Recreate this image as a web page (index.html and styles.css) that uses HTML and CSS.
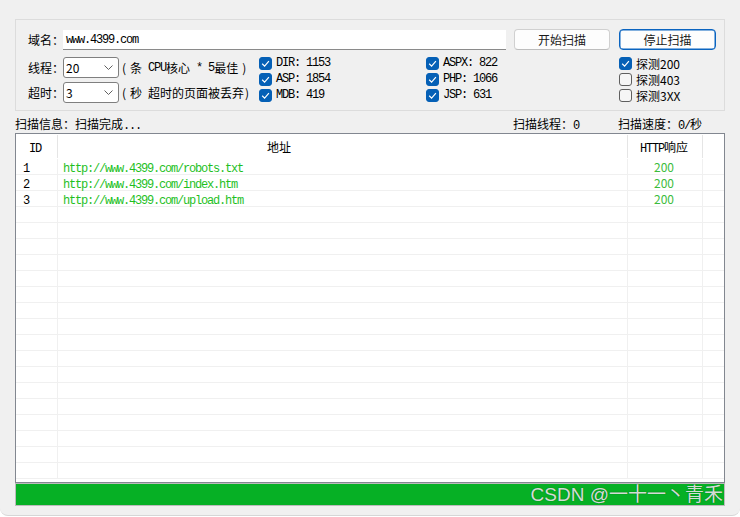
FILE: index.html
```html
<!DOCTYPE html>
<html lang="zh-CN">
<head>
<meta charset="utf-8">
<title>扫描</title>
<link rel="stylesheet" href="styles.css">
</head>
<body>
<div class="window">
  <div class="group">
    <div class="row-top">
      <span class="lbl">域名：</span>
      <div class="input"><span class="m">www.4399.com</span></div>
      <button class="btn btn-start">开始扫描</button>
      <button class="btn btn-stop">停止扫描</button>
    </div>
    <div class="row-bottom">
      <div class="col-left">
        <div class="field">
          <span class="lbl">线程：</span>
          <div class="combo"><span>20</span><svg width="9" height="5" viewBox="0 0 9 5"><polyline points="0.5,0.5 4.5,4.5 8.5,0.5" fill="none" stroke="#606060" stroke-width="1"/></svg></div>
          <span class="hint"><span class="po">(</span>条<span class="m"> CPU</span>核心<span class="m"> * 5</span>最佳<span class="pc">)</span></span>
        </div>
        <div class="field">
          <span class="lbl">超时：</span>
          <div class="combo"><span>3</span><svg width="9" height="5" viewBox="0 0 9 5"><polyline points="0.5,0.5 4.5,4.5 8.5,0.5" fill="none" stroke="#606060" stroke-width="1"/></svg></div>
          <span class="hint"><span class="po">(</span>秒<span class="m"> </span>超时的页面被丢弃<span class="pc2">)</span></span>
        </div>
      </div>
      <div class="checks">
        <label class="chk"><span class="box on"><svg width="13" height="13" viewBox="0 0 13 13"><polyline points="3.2,6.8 5.6,9.1 9.9,4.2" fill="none" stroke="#fff" stroke-width="1.2"/></svg></span><span class="m">DIR: 1153</span></label>
        <label class="chk"><span class="box on"><svg width="13" height="13" viewBox="0 0 13 13"><polyline points="3.2,6.8 5.6,9.1 9.9,4.2" fill="none" stroke="#fff" stroke-width="1.2"/></svg></span><span class="m">ASP: 1854</span></label>
        <label class="chk"><span class="box on"><svg width="13" height="13" viewBox="0 0 13 13"><polyline points="3.2,6.8 5.6,9.1 9.9,4.2" fill="none" stroke="#fff" stroke-width="1.2"/></svg></span><span class="m">MDB: 419</span></label>
      </div>
      <div class="checks">
        <label class="chk"><span class="box on"><svg width="13" height="13" viewBox="0 0 13 13"><polyline points="3.2,6.8 5.6,9.1 9.9,4.2" fill="none" stroke="#fff" stroke-width="1.2"/></svg></span><span class="m">ASPX: 822</span></label>
        <label class="chk"><span class="box on"><svg width="13" height="13" viewBox="0 0 13 13"><polyline points="3.2,6.8 5.6,9.1 9.9,4.2" fill="none" stroke="#fff" stroke-width="1.2"/></svg></span><span class="m">PHP: 1066</span></label>
        <label class="chk"><span class="box on"><svg width="13" height="13" viewBox="0 0 13 13"><polyline points="3.2,6.8 5.6,9.1 9.9,4.2" fill="none" stroke="#fff" stroke-width="1.2"/></svg></span><span class="m">JSP: 631</span></label>
      </div>
      <div class="checks">
        <label class="chk"><span class="box on"><svg width="13" height="13" viewBox="0 0 13 13"><polyline points="3.2,6.8 5.6,9.1 9.9,4.2" fill="none" stroke="#fff" stroke-width="1.2"/></svg></span><span>探测200</span></label>
        <label class="chk"><span class="box"></span><span>探测403</span></label>
        <label class="chk"><span class="box"></span><span>探测3XX</span></label>
      </div>
    </div>
  </div>

  <div class="status">
    <span class="st-info">扫描信息：扫描完成<span class="m">...</span></span>
    <span class="st-threads">扫描线程：<span class="m">0</span></span>
    <span class="st-speed">扫描速度：<span class="m">0/</span>秒</span>
  </div>

  <div class="table">
    <div class="thead">
      <div class="c c-id"><span class="m">ID</span></div>
      <div class="c c-url h-url">地址</div>
      <div class="c c-code"><span class="m">HTTP</span>响应</div>
      <div class="c c-fill"></div>
    </div>
    <div class="tbody">
      <div class="tr"><div class="c c-id"><span class="m">1</span></div><div class="c c-url"><span class="m">http://www.4399.com/robots.txt</span></div><div class="c c-code">200</div><div class="c c-fill"></div></div>
      <div class="tr"><div class="c c-id"><span class="m">2</span></div><div class="c c-url"><span class="m">http://www.4399.com/index.htm</span></div><div class="c c-code">200</div><div class="c c-fill"></div></div>
      <div class="tr"><div class="c c-id"><span class="m">3</span></div><div class="c c-url"><span class="m">http://www.4399.com/upload.htm</span></div><div class="c c-code">200</div><div class="c c-fill"></div></div>
      <div class="tr"><div class="c c-id"></div><div class="c c-url"></div><div class="c c-code"></div><div class="c c-fill"></div></div>
      <div class="tr"><div class="c c-id"></div><div class="c c-url"></div><div class="c c-code"></div><div class="c c-fill"></div></div>
      <div class="tr"><div class="c c-id"></div><div class="c c-url"></div><div class="c c-code"></div><div class="c c-fill"></div></div>
      <div class="tr"><div class="c c-id"></div><div class="c c-url"></div><div class="c c-code"></div><div class="c c-fill"></div></div>
      <div class="tr"><div class="c c-id"></div><div class="c c-url"></div><div class="c c-code"></div><div class="c c-fill"></div></div>
      <div class="tr"><div class="c c-id"></div><div class="c c-url"></div><div class="c c-code"></div><div class="c c-fill"></div></div>
      <div class="tr"><div class="c c-id"></div><div class="c c-url"></div><div class="c c-code"></div><div class="c c-fill"></div></div>
      <div class="tr"><div class="c c-id"></div><div class="c c-url"></div><div class="c c-code"></div><div class="c c-fill"></div></div>
      <div class="tr"><div class="c c-id"></div><div class="c c-url"></div><div class="c c-code"></div><div class="c c-fill"></div></div>
      <div class="tr"><div class="c c-id"></div><div class="c c-url"></div><div class="c c-code"></div><div class="c c-fill"></div></div>
      <div class="tr"><div class="c c-id"></div><div class="c c-url"></div><div class="c c-code"></div><div class="c c-fill"></div></div>
      <div class="tr"><div class="c c-id"></div><div class="c c-url"></div><div class="c c-code"></div><div class="c c-fill"></div></div>
      <div class="tr"><div class="c c-id"></div><div class="c c-url"></div><div class="c c-code"></div><div class="c c-fill"></div></div>
      <div class="tr"><div class="c c-id"></div><div class="c c-url"></div><div class="c c-code"></div><div class="c c-fill"></div></div>
      <div class="tr"><div class="c c-id"></div><div class="c c-url"></div><div class="c c-code"></div><div class="c c-fill"></div></div>
      <div class="tr"><div class="c c-id"></div><div class="c c-url"></div><div class="c c-code"></div><div class="c c-fill"></div></div>
      <div class="tr"><div class="c c-id"></div><div class="c c-url"></div><div class="c c-code"></div><div class="c c-fill"></div></div>
    </div>
  </div>

  <div class="progress"><div class="bar"></div></div>
  <div class="watermark">CSDN @一十一丶青禾</div>
</div>
</body>
</html>
```

FILE: styles.css
```css
* { box-sizing: border-box; }
html { background: #ffffff; }
body {
  margin: 0;
  font-family: "Noto Sans CJK SC", "Noto Sans", sans-serif;
  font-size: 12px;
  color: #000;
}
.window {
  position: relative;
  width: 740px;
  height: 516px;
  background: #f0f0f0;
  padding: 19px 16px 0 15px;
  border-radius: 0 0 8px 8px;
  border-bottom: 1px solid #d6d6d6;
}
.m {
  font-family: "Liberation Mono", monospace;
  font-size: 12px;
  letter-spacing: -1.2px;
  white-space: pre;
}

/* group box */
.group {
  width: 710px;
  height: 92px;
  border: 1px solid #dcdcdc;
  padding: 9px 0 0 12px;
}
.row-top {
  display: flex;
  align-items: center;
  height: 21px;
}
.lbl {
  width: 35px;
  flex: none;
  line-height: 16px;
  white-space: nowrap;
}
.input {
  width: 443px;
  height: 20px;
  margin-top: 1px;
  background: #fff;
  border-bottom: 1px solid #8a8a8a;
  display: flex;
  align-items: center;
  padding-left: 3px;
}
.btn {
  height: 21px;
  margin: 0;
  padding: 0;
  font-family: "Noto Sans CJK SC", sans-serif;
  font-size: 12px;
  color: #1a1a1a;
  background: #fdfdfd;
  border: 1px solid #d0d0d0;
  border-bottom-color: #bdbdbd;
  border-radius: 4px;
  line-height: 18px;
}
.btn-start { width: 96px; margin-left: 8px; }
.btn-stop {
  width: 97px;
  margin-left: 9px;
  border: 1px solid #0a64c0;
  box-shadow: inset 0 0 0 0.5px #0a64c0;
}

.row-bottom {
  display: grid;
  grid-template-columns: 231px 167px 193px auto;
  margin-top: 7px;
}
.col-left {
  display: flex;
  flex-direction: column;
  gap: 4px;
}
.field {
  display: flex;
  align-items: center;
  height: 21px;
}
.combo {
  width: 56px;
  height: 21px;
  background: #fff;
  border: 1px solid #7f7f7f;
  border-radius: 3px;
  display: flex;
  align-items: center;
  justify-content: space-between;
  padding: 0 5px 0 2px;
  font-size: 12px;
}
.hint {
  margin-left: 3px;
  white-space: nowrap;
  display: flex;
  align-items: center;
}
.po { margin-right: 4px; }
.pc { margin-left: 4px; }
.pc2 { margin-left: 1px; }

.checks {
  display: flex;
  flex-direction: column;
  margin-top: -2px;
}
.chk {
  display: flex;
  align-items: center;
  height: 16px;
  white-space: nowrap;
}
.box {
  width: 13px;
  height: 13px;
  flex: none;
  margin-right: 4px;
  border-radius: 3px;
  border: 1px solid #5f5f5f;
  background: #f6f6f6;
}
.box.on {
  background: #0560b6;
  border-color: #0560b6;
}
.box svg { display: block; margin: -1px; }

/* status line */
.status {
  display: flex;
  height: 16px;
  line-height: 16px;
  margin-top: 5px;
  white-space: nowrap;
}
.st-info { width: 498px; }
.st-threads { width: 105px; }

/* table */
.table {
  width: 710px;
  height: 350px;
  margin-top: 1px;
  border: 1px solid #828790;
  background: #fff;
  overflow: hidden;
}
.thead {
  display: flex;
  height: 25px;
  padding-top: 1px;
  padding-bottom: 1px;
}
.thead .c {
  border-right: 1px solid #e5e5e5;
  line-height: 23px;
}
.thead .c-fill { border-right: none; }
.tr {
  display: flex;
  height: 16px;
  border-bottom: 1px solid #f0f0f0;
}
.c {
  flex: none;
  white-space: nowrap;
}
.tr .c {
  border-right: 1px solid #f0f0f0;
  line-height: 15px;
}
.tr .c-fill { border-right: none; }
.c-id { width: 42px; padding-left: 7px; }
.thead .c-id { padding-left: 13px; }
.c-url { width: 570px; padding-left: 5px; color: #1fbf1f; }
.thead .c-url { color: #000; padding-left: 209px; }
.c-code { width: 75px; text-align: center; color: #3cbc3c; padding-right: 2px; }
.thead .c-code { color: #000; }
.c-fill { width: 21px; }

/* progress */
.progress {
  width: 710px;
  height: 23px;
  border: 1px solid #bcbcbc;
  background: #e6e6e6;
}
.bar {
  width: 100%;
  height: 100%;
  background: #06b025;
}
.watermark {
  position: absolute;
  right: 17px;
  top: 484px;
  font-family: "Liberation Sans", "Noto Sans CJK SC", sans-serif;
  font-size: 19px;
  line-height: 22px;
  color: rgba(240, 240, 240, 0.9);
  text-shadow: 0 0 1px rgba(0, 0, 0, 0.55);
  white-space: nowrap;
}
```
